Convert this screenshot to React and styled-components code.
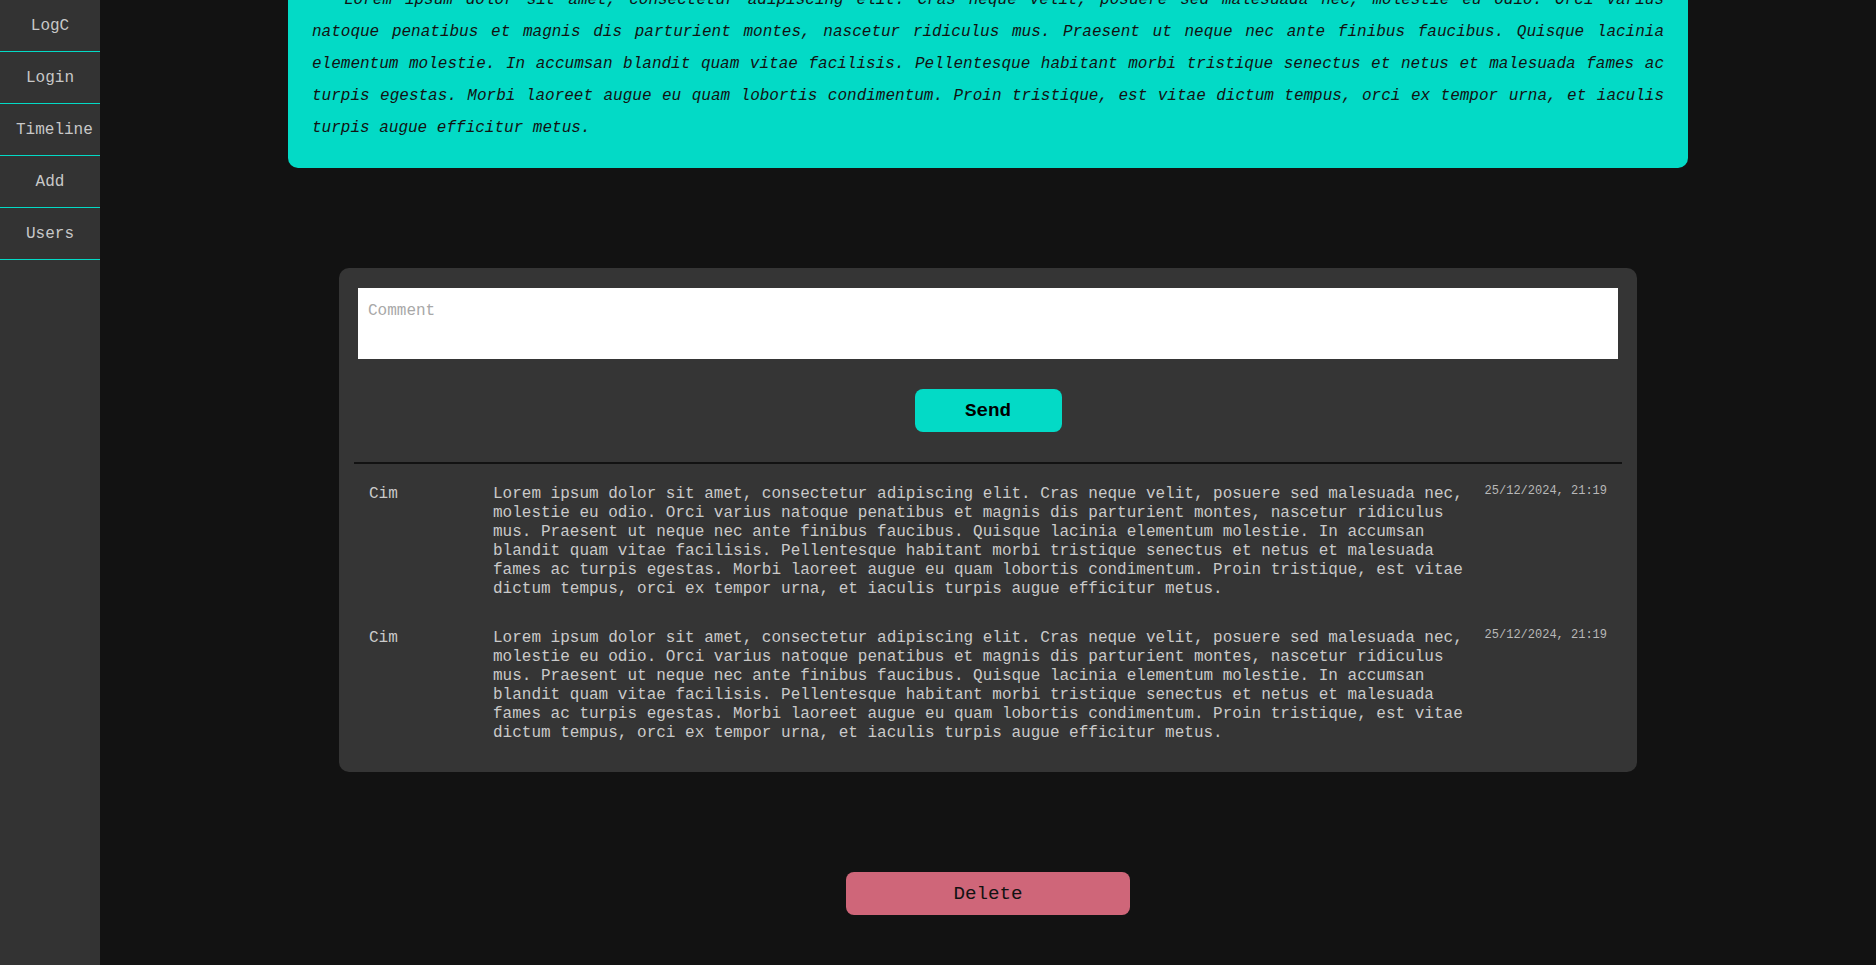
import React from "react";
import styled, { createGlobalStyle } from "styled-components";

const GlobalStyle = createGlobalStyle`
  html, body {
    margin: 0;
    padding: 0;
    background: #121212;
    font-family: "Liberation Mono", "Courier New", monospace;
    overflow: hidden;
  }
  * { box-sizing: border-box; }
`;

const Shell = styled.div`
  display: flex;
  height: 100vh;
  overflow: hidden;
  background: #121212;
`;

const Sidebar = styled.nav`
  flex: 0 0 100px;
  width: 100px;
  height: 100vh;
  background: #333333;
  display: flex;
  flex-direction: column;
`;

const NavItem = styled.a`
  display: block;
  height: 52px;
  padding: 2px 16px 0;
  line-height: 49px;
  text-align: center;
  white-space: nowrap;
  border-bottom: 1px solid #03dac6;
  color: #c8c8c8;
  font-size: 16px;
  text-decoration: none;
  cursor: pointer;
`;

const Main = styled.main`
  flex: 1;
  display: flex;
  flex-direction: column;
  align-items: center;
  gap: 100px;
  padding-bottom: 100px;
`;

const PostCard = styled.article`
  width: 1400px;
  margin-top: -40px;
  background: #03dac6;
  border-radius: 10px;
  padding: 24px;
  color: #121212;
  font-style: italic;
  font-size: 16px;
  line-height: 32px;
  text-align: justify;
  text-indent: 32px;
`;

const CommentCard = styled.section`
  width: 1298px;
  background: #353535;
  border-radius: 10px;
  padding: 20px 15px 14px;
  display: flex;
  flex-direction: column;
`;

const CommentInput = styled.textarea`
  display: block;
  margin: 0 4px;
  height: 71px;
  border: none;
  outline: none;
  resize: none;
  background: #ffffff;
  padding: 14px 10px 10px;
  font-family: "Liberation Mono", "Courier New", monospace;
  font-size: 16px;
  color: #121212;
  &::placeholder {
    color: #a8a8a8;
  }
`;

const Button = styled.button`
  height: 43px;
  width: ${(p) => p.$width}px;
  border: none;
  border-radius: 8px;
  background: ${(p) => p.$bg};
  color: ${(p) => p.$fg};
  font-family: "Liberation Mono", "Courier New", monospace;
  font-size: 19.2px;
  font-weight: ${(p) => (p.$bold ? 700 : 400)};
  cursor: pointer;
  flex: 0 0 auto;
`;

const SendRow = styled.div`
  display: flex;
  justify-content: center;
  padding: 30px 0;
`;

const Separator = styled.hr`
  margin: 0;
  border: none;
  height: 2px;
  background: #121212;
`;

const CommentList = styled.div`
  display: flex;
  flex-direction: column;
  padding-top: 6px;
`;

const CommentRow = styled.div`
  display: grid;
  grid-template-columns: 124px 1fr auto;
  align-items: start;
  padding: 15px 15px;
  color: #cacaca;
`;

const Author = styled.span`
  font-size: 16px;
  line-height: 19px;
`;

const CommentText = styled.p`
  margin: 0;
  padding-right: 12px;
  font-size: 16px;
  line-height: 19px;
`;

const CommentDate = styled.span`
  font-size: 12px;
  line-height: 12px;
  color: #b8b8b8;
`;

const lorem =
  "Lorem ipsum dolor sit amet, consectetur adipiscing elit. Cras neque velit, posuere sed malesuada nec, molestie eu odio. Orci varius natoque penatibus et magnis dis parturient montes, nascetur ridiculus mus. Praesent ut neque nec ante finibus faucibus. Quisque lacinia elementum molestie. In accumsan blandit quam vitae facilisis. Pellentesque habitant morbi tristique senectus et netus et malesuada fames ac turpis egestas. Morbi laoreet augue eu quam lobortis condimentum. Proin tristique, est vitae dictum tempus, orci ex tempor urna, et iaculis turpis augue efficitur metus.";

const navItems = ["LogC", "Login", "Timeline", "Add", "Users"];

const comments = [
  { author: "Cim", text: lorem, date: "25/12/2024, 21:19" },
  { author: "Cim", text: lorem, date: "25/12/2024, 21:19" },
];

export default function App() {
  return (
    <>
      <GlobalStyle />
      <Shell>
        <Sidebar>
          {navItems.map((n) => (
            <NavItem key={n}>{n}</NavItem>
          ))}
        </Sidebar>
        <Main>
          <PostCard>{lorem}</PostCard>
          <CommentCard>
            <CommentInput placeholder="Comment" />
            <SendRow>
              <Button $width={147} $bg="#03dac6" $fg="#000000" $bold>
                Send
              </Button>
            </SendRow>
            <Separator />
            <CommentList>
              {comments.map((c, i) => (
                <CommentRow key={i}>
                  <Author>{c.author}</Author>
                  <CommentText>{c.text}</CommentText>
                  <CommentDate>{c.date}</CommentDate>
                </CommentRow>
              ))}
            </CommentList>
          </CommentCard>
          <Button $width={284} $bg="#cf6679" $fg="#121212">
            Delete
          </Button>
        </Main>
      </Shell>
    </>
  );
}
